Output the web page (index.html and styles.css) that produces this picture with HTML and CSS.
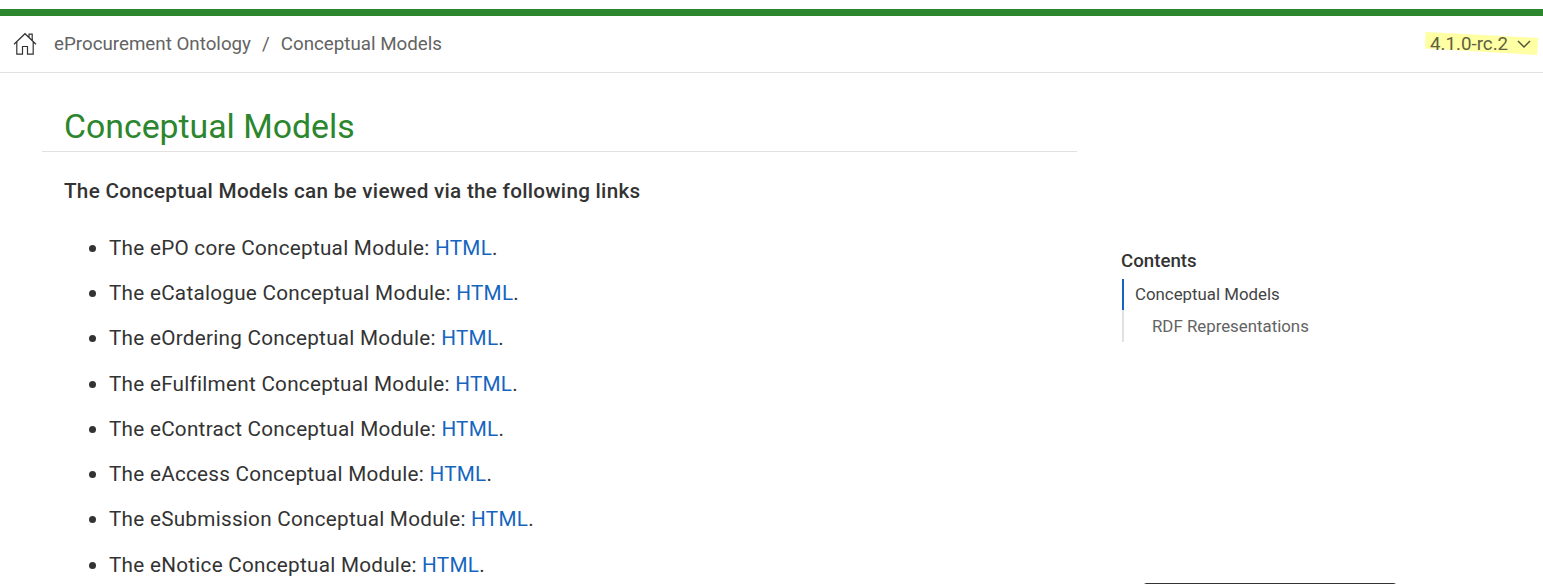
FILE: index.html
```html
<!DOCTYPE html>
<html lang="en">
<head>
<meta charset="utf-8">
<title>Conceptual Models</title>
<link rel="stylesheet" href="styles.css">
</head>
<body>
<header class="toolbar">
  <a class="home" href="#" aria-label="Home"><svg width="24" height="24" viewBox="0 0 24 24" fill="none" stroke="#333" stroke-width="1.2"><path d="M1 12.3 12 1.7l11 10.6M3.8 10v12.2h5.7v-7.7h5v7.7h5.7V10M16 5.3V2.2h3.2v6.1"/></svg></a>
  <nav class="breadcrumbs"><a href="#">eProcurement Ontology</a><span class="slash">/</span><a href="#">Conceptual Models</a></nav>
  <div class="version"><svg class="marker" width="113" height="23" viewBox="0 0 113 23"><path d="M.5 0 113 6l-.8 17L0 16.5z" fill="#ffffa3"/></svg><span class="version-label">4.1.0-rc.2</span><svg class="chevron" width="14" height="9" viewBox="0 0 14 9" fill="none" stroke="#55553a" stroke-width="1.5"><path d="m1 1 6 6 6-6"/></svg></div>
</header>
<div class="content">
  <main class="doc">
    <h1>Conceptual Models</h1>
    <p class="intro">The Conceptual Models can be viewed via the following links</p>
    <ul>
      <li>The ePO core Conceptual Module: <a href="#">HTML</a>.</li>
      <li>The eCatalogue Conceptual Module: <a href="#">HTML</a>.</li>
      <li>The eOrdering Conceptual Module: <a href="#">HTML</a>.</li>
      <li>The eFulfilment Conceptual Module: <a href="#">HTML</a>.</li>
      <li>The eContract Conceptual Module: <a href="#">HTML</a>.</li>
      <li>The eAccess Conceptual Module: <a href="#">HTML</a>.</li>
      <li>The eSubmission Conceptual Module: <a href="#">HTML</a>.</li>
      <li>The eNotice Conceptual Module: <a href="#">HTML</a>.</li>
    </ul>
  </main>
  <aside class="toc">
    <h3>Contents</h3>
    <a class="active" href="#">Conceptual Models</a>
    <a class="nested" href="#">RDF Representations</a>
    <div class="panel"></div>
  </aside>
</div>
</body>
</html>
```
FILE: styles.css
```css
* { box-sizing: border-box; }
body { margin: 0; height: 584px; overflow: hidden; background: #fff; color: #333; font-family: Roboto, sans-serif; }
a { text-decoration: none; color: inherit; }
.toolbar { margin-top: 9px; height: 64px; border-top: 7px solid #2c862d; border-bottom: 1px solid #e1e1e1; display: flex; align-items: center; padding: 0 5px 0 13px; color: #636363; font-size: 18.75px; }
.home { display: flex; margin-right: 17px; }
.breadcrumbs { flex: 1; display: flex; line-height: 22px; }
.slash { margin: 0 11px; }
.version { position: relative; width: 113px; height: 23px; display: flex; align-items: center; padding: 0 7px 0 5px; justify-content: space-between; color: #606040; }
.marker { position: absolute; left: 0; top: -1px; }
.version-label, .chevron { position: relative; }
.version-label { line-height: 22px; margin-bottom: 1px; }
.content { display: flex; height: 511px; }
.doc { width: 1035px; margin-left: 42px; font-size: 20.7px; letter-spacing: .265px; }
h1 { margin: 28px 0 0; height: 51px; line-height: 52px; border-bottom: 1px solid #e1e1e1; padding-left: 22px; color: #2c862d; font-weight: 400; font-size: 33.8px; letter-spacing: 0; }
.intro { margin: 23px 0 0 22px; line-height: 32px; font-weight: 500; }
ul { margin: 24.85px 0 0; padding: 0 0 0 67px; list-style: none; }
li { line-height: 32px; margin-bottom: 13.25px; }
li::before { content: ""; display: inline-block; width: 7px; height: 7px; margin: 0 13px 3px -20px; border-radius: 50%; background: #333; }
li a { color: #1565c0; }
.toc { width: 276px; margin-left: 44px; display: flex; flex-direction: column; padding-top: 174px; font-size: 16.83px; }
.toc h3 { margin: 0 0 3px; font-size: 18.7px; line-height: 29px; font-weight: 500; }
.toc a { margin-left: 1px; line-height: 31px; border-left: 2px solid #e1e1e1; padding-left: 11px; color: #636363; }
.toc .active { border-color: #1565c0; color: #444; }
.toc .nested { line-height: 32px; padding-left: 28px; }
.panel { width: 256px; height: 20px; flex: none; margin: 240.6px 0 0 21px; background: #333; border-radius: 5px; }
```
